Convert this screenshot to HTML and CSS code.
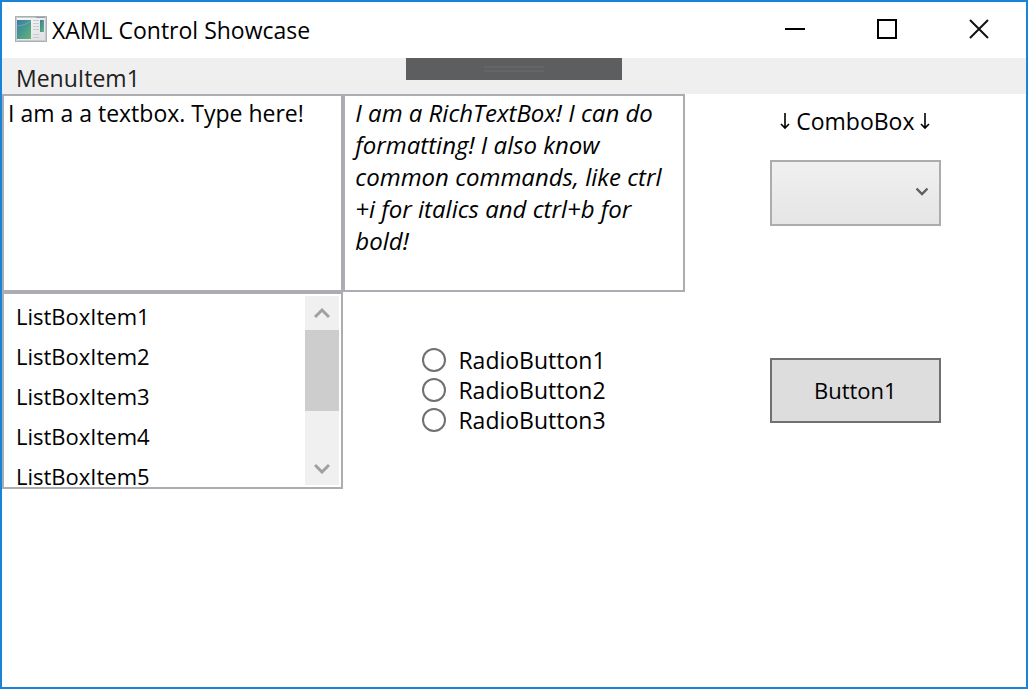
FILE: index.html
```html
<!DOCTYPE html>
<html lang="en">
<head>
<meta charset="utf-8">
<title>XAML Control Showcase</title>
<link rel="stylesheet" href="styles.css">
</head>
<body>
<div class="window">
  <header class="titlebar">
    <svg class="app-icon" width="32" height="26" viewBox="0 0 32 26" aria-hidden="true">
      <defs>
        <linearGradient id="pane" x1="0" y1="0" x2="1" y2="1">
          <stop offset="0" stop-color="#3f7aa8"/><stop offset=".5" stop-color="#4a9a90"/><stop offset="1" stop-color="#66b474"/>
        </linearGradient>
        <linearGradient id="frame" x1="0" y1="0" x2="1" y2="1">
          <stop offset="0" stop-color="#fafafa"/><stop offset="1" stop-color="#dcdee0"/>
        </linearGradient>
      </defs>
      <rect x=".5" y=".5" width="31" height="25" fill="url(#frame)" stroke="#a9afb4"/>
      <path d="M1.500 24V1.500h29V24.500h-29" stroke="#c6cbd0" fill="none"/>
      <path d="M21 1.500h9" stroke="#8f9cab"/>
      <rect x="2" y="4" width="14" height="19" fill="url(#pane)"/>
      <path d="M2 10q8 0 14-5" stroke="#74b4c0" fill="none" opacity=".7"/>
      <path d="M18 4.500h6M18 7.500h6M18 10.500h6M18 13.500h6M18 18.500h6M18 21.500h6" stroke="#c9cbcd"/>
      <rect x="25" y="4" width="4" height="12" fill="url(#pane)"/>
    </svg>
    <h1 class="title">XAML Control Showcase</h1>
    <div class="caption-buttons">
      <button class="caption-button" type="button" aria-label="Minimize"><svg width="20" height="20" viewBox="0 0 20 20"><path d="M0 10h20" stroke="#000" stroke-width="2"/></svg></button>
      <button class="caption-button" type="button" aria-label="Maximize"><svg width="20" height="20" viewBox="0 0 20 20"><path d="M1 1h18v18H1z" fill="none" stroke="#000" stroke-width="2"/></svg></button>
      <button class="caption-button" type="button" aria-label="Close"><svg width="20" height="20" viewBox="0 0 20 20"><path d="M1 1l18 18M19 1L1 19" stroke="#111" stroke-width="2"/></svg></button>
    </div>
  </header>
  <nav class="menu">
    <button class="menu-item" type="button">MenuItem1</button>
    <div class="debug-tab"><span class="grip"></span></div>
  </nav>
  <main class="controls">
    <textarea class="textbox" aria-label="Text box" spellcheck="false">I am a a textbox. Type here!</textarea>
    <div class="textbox richtext" role="textbox" aria-multiline="true" aria-label="Rich text box" contenteditable="true" spellcheck="false"><em>I am a RichTextBox! I can do formatting! I also know common commands, like ctrl<wbr>+i for italics and ctrl+b for bold!</em></div>
    <div class="combo">
      <label class="combo-label" for="combo"><svg width="10" height="18" viewBox="0 0 10 18" aria-hidden="true"><path d="M5 1v15M1 12l4 4 4-4" fill="none" stroke="#000" stroke-width="1.600"/></svg>ComboBox<svg width="10" height="18" viewBox="0 0 10 18" aria-hidden="true"><path d="M5 1v15M1 12l4 4 4-4" fill="none" stroke="#000" stroke-width="1.600"/></svg></label>
      <div class="select-wrap">
        <select class="select" id="combo"><option></option></select>
        <svg class="select-chevron" width="12" height="9" viewBox="0 0 12 9" aria-hidden="true"><path d="M.500 1.500L6 7l5.500-5.500" fill="none" stroke="#606060" stroke-width="2.400"/></svg>
      </div>
    </div>
    <div class="listbox">
      <ul class="list" role="listbox" aria-label="List box">
        <li class="list-item" role="option">ListBoxItem1</li>
        <li class="list-item" role="option">ListBoxItem2</li>
        <li class="list-item" role="option">ListBoxItem3</li>
        <li class="list-item" role="option">ListBoxItem4</li>
        <li class="list-item" role="option">ListBoxItem5</li>
      </ul>
      <div class="scrollbar">
        <button class="scroll-button" type="button" aria-label="Scroll up"><svg width="16" height="12" viewBox="0 0 16 12"><path d="M1 10l7-7 7 7" fill="none" stroke="#a0a0a0" stroke-width="3"/></svg></button>
        <div class="track"><div class="thumb"></div></div>
        <button class="scroll-button" type="button" aria-label="Scroll down"><svg width="16" height="12" viewBox="0 0 16 12"><path d="M1 3l7 7 7-7" fill="none" stroke="#a0a0a0" stroke-width="3"/></svg></button>
      </div>
    </div>
    <div class="radios" role="radiogroup" aria-label="Radio buttons">
      <label class="radio"><input class="radio-input" type="radio" name="choice">RadioButton1</label>
      <label class="radio"><input class="radio-input" type="radio" name="choice">RadioButton2</label>
      <label class="radio"><input class="radio-input" type="radio" name="choice">RadioButton3</label>
    </div>
    <div class="cell">
      <button class="button" type="button">Button1</button>
    </div>
  </main>
</div>
</body>
</html>
```
FILE: styles.css
```css
* { box-sizing: border-box; }

body {
  margin: 0;
  background: #fff;
  color: #000;
  font: 23px/32px "Open Sans", "Noto Sans", sans-serif;
}

button, select, textarea { font: inherit; color: inherit; border-radius: 0; }

.window {
  display: flex;
  flex-direction: column;
  height: 100vh;
  border: 2px solid #1883d7;
}

.titlebar {
  display: flex;
  align-items: center;
  flex: none;
  height: 56px;
  padding: 0 1px 0 13px;
}

.app-icon { margin-bottom: 2px; }
.title { margin: 0 0 0 5px; font-size: 23px; font-weight: 400; }
.caption-buttons { display: flex; align-self: flex-start; margin-left: auto; }

.caption-button {
  display: flex;
  align-items: center;
  justify-content: center;
  width: 92px;
  height: 54px;
  padding: 0;
  border: 0;
  background: none;
}

.menu {
  position: relative;
  display: flex;
  flex: none;
  height: 36px;
  background: #efefef;
}

.menu-item {
  padding: 3px 14px 0;
  border: 0;
  background: none;
  color: #212121;
}

.debug-tab {
  position: absolute;
  top: 0;
  left: 50%;
  display: flex;
  align-items: center;
  justify-content: center;
  width: 216px;
  height: 22px;
  margin-left: -108px;
  background: #5d5e60;
}

.grip {
  width: 60px;
  height: 6px;
  border: solid #646567;
  border-width: 2px 0;
}

.controls {
  flex: 1;
  display: grid;
  grid-template-columns: repeat(3, minmax(0, 1fr));
  grid-template-rows: repeat(3, minmax(0, 1fr));
  min-height: 0;
}

.textbox {
  display: block;
  width: 100%;
  height: 100%;
  padding: 1px 4px;
  border: 2px solid #abadb3;
  outline: 0;
  background: #fff;
  resize: none;
  overflow: hidden;
}

.richtext { padding: 1px 10px; font-size: 24px; }

.combo {
  display: flex;
  flex-direction: column;
  align-items: center;
  gap: 23px;
  padding-top: 11px;
}

.combo-label { display: flex; align-items: center; gap: 6px; }
.select-wrap { position: relative; width: 50%; height: 66px; }

.select {
  appearance: none;
  width: 100%;
  height: 100%;
  border: 2px solid #acacac;
  background: linear-gradient(#f0f0f0, #e5e5e5);
}

.select-chevron {
  position: absolute;
  top: 27px;
  right: 13px;
  pointer-events: none;
}

.listbox {
  display: flex;
  min-height: 0;
  padding: 2px;
  border: 2px solid #abadb3;
  overflow: hidden;
}

.list {
  flex: 1;
  margin: 0;
  padding: 0;
  font-size: 22px;
  list-style: none;
}

.list-item { padding: 4px 10px; }

.scrollbar {
  display: flex;
  flex-direction: column;
  width: 34px;
  background: #f0f0f0;
}

.scroll-button {
  display: flex;
  align-items: center;
  justify-content: center;
  height: 34px;
  padding: 0;
  border: 0;
  background: none;
}

.track { flex: 1; }
.thumb { height: 67%; background: #cdcdcd; }

.radios {
  display: flex;
  flex-direction: column;
  align-items: center;
  justify-content: center;
}

.radio {
  display: flex;
  align-items: center;
  gap: 12px;
  line-height: 30px;
}

.radio-input {
  appearance: none;
  width: 24px;
  height: 24px;
  margin: 0;
  border: 2px solid #707070;
  border-radius: 50%;
  background: #fff;
}

.radio-input:checked { background: radial-gradient(#212121 45%, #fff 50%); }

.cell {
  display: flex;
  align-items: center;
  justify-content: center;
}

.button {
  width: 50%;
  height: 65px;
  border: 2px solid #707070;
  background: #ddd;
  font-size: 22px;
}
```
